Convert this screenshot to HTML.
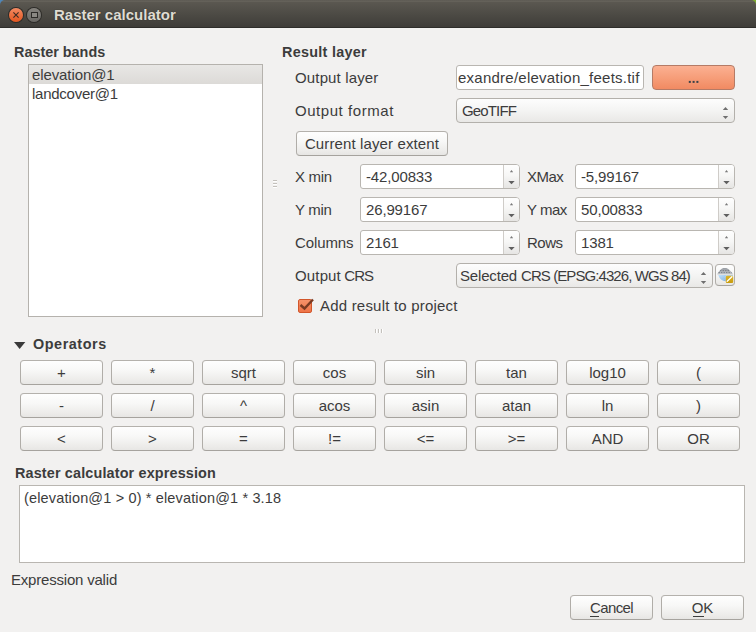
<!DOCTYPE html>
<html><head><meta charset="utf-8">
<style>
*{box-sizing:border-box;margin:0;padding:0}
html,body{width:756px;height:632px;overflow:hidden;background:#f2f1f0}
body{position:relative;font-family:"Liberation Sans",sans-serif;font-size:15px;color:#3c3c3c}
.a{position:absolute;white-space:nowrap}
.t{position:absolute;white-space:nowrap;line-height:1}
.b{font-weight:bold;font-size:14.4px}
#title{position:absolute;left:0;top:0;width:756px;height:28px;background:linear-gradient(#56534d 0px,#69665e 1px,#5a5750 2.5px,#4d4b45 14px,#3f3d39 26.5px,#2e2d2a 27px);border-radius:5px 5px 0 0}
.edit{position:absolute;background:#fff;border:1px solid #b9b6b1;border-radius:3px;overflow:hidden}
.btn{position:absolute;border:1px solid #b0ada8;border-color:#b4b1ac #b0ada8 #a6a39e;border-radius:4px;background:linear-gradient(#fefefe,#f8f8f7 40%,#ecebe9 85%,#e7e6e4);color:#3c3c3c}
.bt{left:0;right:0;top:4px;text-align:center}
.combo{position:absolute;border:1px solid #b3b0ab;border-radius:4px;background:linear-gradient(#fdfdfd,#f4f4f3 50%,#e9e8e6)}
.spin{position:absolute;background:#fff;border:1px solid #b9b6b1;border-radius:3px 4px 4px 3px;overflow:hidden}
.spin .sb{position:absolute;right:0;top:0;bottom:0;width:16px;border-left:1px solid #cfccc8;background:linear-gradient(#fefefe,#f7f7f6 45%,#e6e5e3)}
</style></head><body>
<div class="a" style="left:0;top:0;width:6px;height:6px;background:#4f86b8"></div><div class="a" style="left:750px;top:0;width:6px;height:6px;background:#7cab2c"></div>
<div id="title"></div>
<div class="a" style="left:8.6px;top:7.9px;width:14px;height:14px;border-radius:50%;background:linear-gradient(#f38a62,#e4561f);box-shadow:0 0 0 1px #2c2b28"></div>
<svg class="a" style="left:7.6px;top:6.9px" width="16" height="16"><path d="M5.4 5.4L10.6 10.6M10.6 5.4L5.4 10.6" stroke="#3a2a22" stroke-width="1.1"/></svg>
<div class="a" style="left:27.4px;top:7.9px;width:14px;height:14px;border-radius:50%;background:linear-gradient(#85837e,#6a6864);box-shadow:0 0 0 1px #2c2b28"></div>
<div class="a" style="left:31.2px;top:11.8px;width:6.8px;height:6.6px;border:1.3px solid #2b2a27;background:#8a8883"></div>
<div class="t" style="left:54px;top:7px;color:#dfdbd2;font-size:15px;font-weight:bold;text-shadow:0 0 1px #2a2926">Raster calculator</div>

<div class="t b" style="left:14px;top:45px">Raster bands</div>
<div class="edit" style="left:28px;top:64px;width:235px;height:253px;border-radius:0;border-color:#b5b2ad">
  <div class="a" style="left:0;top:0;width:233px;height:19px;background:linear-gradient(#e8e7e5,#dcdad7)"></div>
  <div class="t" style="left:3px;top:2px;letter-spacing:-0.1px">elevation@1</div>
  <div class="t" style="left:3px;top:21px;letter-spacing:-0.25px">landcover@1</div>
</div>
<div class="a" style="left:273px;top:180px;width:4px;height:1px;background:#c4c1bc;box-shadow:0 1px #fff,0 3px #c4c1bc,0 4px #fff,0 6px #c4c1bc,0 7px #fff"></div>

<div class="t b" style="left:282px;top:45px;letter-spacing:0.28px">Result layer</div>
<div class="t" style="left:295px;top:70px;letter-spacing:0.15px">Output layer</div>
<div class="edit" style="left:456px;top:65px;width:188px;height:25px">
  <div class="t" style="left:1px;top:4px;letter-spacing:0.24px">exandre/elevation_feets.tif</div>
</div>
<div class="btn" style="left:652px;top:65px;width:83px;height:25px;background:linear-gradient(#fbb092,#f7a07c 45%,#f18a62);border-color:#b57b66"></div>
<svg class="a" style="left:686px;top:78px" width="16" height="8"><rect x="2.8" y="2.9" width="2" height="2" fill="#3b4148"/><rect x="6.6" y="2.9" width="2" height="2" fill="#3b4148"/><rect x="10.4" y="2.9" width="2" height="2" fill="#3b4148"/></svg>
<div class="t" style="left:295px;top:103px;letter-spacing:0.55px">Output format</div>
<div class="combo" style="left:456px;top:98px;width:279px;height:25px">
  <div class="t" style="left:5px;top:4px;letter-spacing:-0.85px">GeoTIFF</div>
  <svg class="a" style="left:265px;top:0" width="14" height="23"><path d="M0.8 11.1L3.5 8L6.2 11.1Z" fill="#6f6f6f"/><path d="M0.8 17H6.2L3.5 20Z" fill="#6f6f6f"/></svg>
</div>
<div class="btn" style="left:296px;top:131px;width:152px;height:25px">
  <div class="t bt" style="letter-spacing:0.12px">Current layer extent</div>
</div>

<div class="t" style="left:295px;top:169px;letter-spacing:-0.3px">X min</div>
<div class="spin" style="left:360px;top:164px;width:160px;height:25px"><div class="t" style="left:5px;top:4px;letter-spacing:-0.15px">-42,00833</div><div class="sb"><svg width="16" height="23" style="position:absolute;left:0;top:0"><path d="M5.8 7.3L7.5 5L9.2 7.3Z" fill="#7a7a7a"/><path d="M4.3 16H10.7L7.5 19.2Z" fill="#5f5f5f"/></svg></div></div>
<div class="t" style="left:527px;top:169px;letter-spacing:-0.5px">XMax</div>
<div class="spin" style="left:575px;top:164px;width:160px;height:25px"><div class="t" style="left:5px;top:4px;letter-spacing:-0.15px">-5,99167</div><div class="sb"><svg width="16" height="23" style="position:absolute;left:0;top:0"><path d="M5.8 7.3L7.5 5L9.2 7.3Z" fill="#7a7a7a"/><path d="M4.3 16H10.7L7.5 19.2Z" fill="#5f5f5f"/></svg></div></div>
<div class="t" style="left:295px;top:202px;letter-spacing:-0.3px">Y min</div>
<div class="spin" style="left:360px;top:197px;width:160px;height:25px"><div class="t" style="left:5px;top:4px;letter-spacing:-0.15px">26,99167</div><div class="sb"><svg width="16" height="23" style="position:absolute;left:0;top:0"><path d="M5.8 7.3L7.5 5L9.2 7.3Z" fill="#7a7a7a"/><path d="M4.3 16H10.7L7.5 19.2Z" fill="#5f5f5f"/></svg></div></div>
<div class="t" style="left:527px;top:202px;letter-spacing:-0.5px">Y max</div>
<div class="spin" style="left:575px;top:197px;width:160px;height:25px"><div class="t" style="left:5px;top:4px;letter-spacing:-0.15px">50,00833</div><div class="sb"><svg width="16" height="23" style="position:absolute;left:0;top:0"><path d="M5.8 7.3L7.5 5L9.2 7.3Z" fill="#7a7a7a"/><path d="M4.3 16H10.7L7.5 19.2Z" fill="#5f5f5f"/></svg></div></div>
<div class="t" style="left:295px;top:235px;letter-spacing:-0.1px">Columns</div>
<div class="spin" style="left:360px;top:230px;width:160px;height:25px"><div class="t" style="left:5px;top:4px;letter-spacing:-0.15px">2161</div><div class="sb"><svg width="16" height="23" style="position:absolute;left:0;top:0"><path d="M5.8 7.3L7.5 5L9.2 7.3Z" fill="#7a7a7a"/><path d="M4.3 16H10.7L7.5 19.2Z" fill="#5f5f5f"/></svg></div></div>
<div class="t" style="left:527px;top:235px;letter-spacing:-0.5px">Rows</div>
<div class="spin" style="left:575px;top:230px;width:160px;height:25px"><div class="t" style="left:5px;top:4px;letter-spacing:-0.15px">1381</div><div class="sb"><svg width="16" height="23" style="position:absolute;left:0;top:0"><path d="M5.8 7.3L7.5 5L9.2 7.3Z" fill="#7a7a7a"/><path d="M4.3 16H10.7L7.5 19.2Z" fill="#5f5f5f"/></svg></div></div>

<div class="t" style="left:295px;top:268px;letter-spacing:0.15px">Output<span style="letter-spacing:-0.9px"> CRS</span></div>
<div class="combo" style="left:456px;top:263px;width:257px;height:25px">
  <div class="t" style="left:3px;top:4px"><span style="letter-spacing:-0.17px">Selected </span><span style="letter-spacing:-0.92px">CRS (EPSG:4326, WGS 84)</span></div>
  <svg class="a" style="left:243px;top:0" width="14" height="23"><path d="M0.8 11.1L3.5 8L6.2 11.1Z" fill="#6f6f6f"/><path d="M0.8 17H6.2L3.5 20Z" fill="#6f6f6f"/></svg>
</div>
<div class="btn" style="left:715px;top:264px;width:20px;height:22px"></div>
<svg class="a" style="left:716px;top:267px" width="18" height="17" viewBox="0 0 18 17">
  <defs><linearGradient id="dm" x1="0" y1="0" x2="0" y2="1"><stop offset="0" stop-color="#9a9ea4"/><stop offset="0.7" stop-color="#b3b8be"/><stop offset="1" stop-color="#c9ccd0"/></linearGradient>
  <linearGradient id="bl" x1="0" y1="0" x2="1" y2="1"><stop offset="0" stop-color="#c2e2fb"/><stop offset="1" stop-color="#6fa5dc"/></linearGradient>
  <linearGradient id="yl" x1="0" y1="0" x2="0" y2="1"><stop offset="0" stop-color="#dcb52c"/><stop offset="1" stop-color="#c89c0c"/></linearGradient></defs>
  <path d="M1.1 7.6 C2.2 5 4.6 2.2 7.2 1.1 L10.3 1.1 C13 2.2 15.6 5 17.2 7.6 Z" fill="url(#dm)"/>
  <path d="M4.2 3.6H14M2.6 5.6H15.6" stroke="#6e737a" stroke-width="0.9" stroke-dasharray="1.2 1.3" fill="none"/>
  <path d="M2.2 7.9 H17 V8.8 H9.8 V14.2 Q4.2 13.8 2.2 7.9Z" fill="url(#bl)"/>
  <path d="M4 10.5H9M5.5 12.5H9" stroke="#a9cdef" stroke-width="0.7" stroke-dasharray="1 1" fill="none"/>
  <rect x="9.8" y="8.8" width="7.4" height="7.2" rx="1.2" fill="url(#yl)"/>
  <path d="M11.2 14.3 L15.9 9.8" stroke="#fff" stroke-width="1.3" stroke-linecap="round"/>
</svg>

<div class="a" style="left:298px;top:299px;width:14px;height:14px;border:1px solid #d2562a;border-radius:2px;background:linear-gradient(#f6926a,#ee7447)"></div>
<svg class="a" style="left:297px;top:296px" width="18" height="16"><path d="M3.5 9 L7.5 12.5 L16 3.5" fill="none" stroke="#7a3a22" stroke-width="2.4"/></svg>
<div class="t" style="left:320px;top:298px;letter-spacing:0.2px">Add result to project</div>
<div class="a" style="left:375px;top:329px;width:1px;height:4px;background:#c4c1bc;box-shadow:1px 0 #fff,3px 0 #c4c1bc,4px 0 #fff,6px 0 #c4c1bc,7px 0 #fff"></div>

<svg class="a" style="left:13.5px;top:341.6px" width="12" height="8"><path d="M0 0H11.3L5.65 7Z" fill="#3a3a3a"/></svg>
<div class="t b" style="left:33px;top:337px;letter-spacing:0.55px">Operators</div>
<div class="btn" style="left:20px;top:360px;width:83px;height:25px"><div class="t bt">+</div></div>
<div class="btn" style="left:111px;top:360px;width:83px;height:25px"><div class="t bt">*</div></div>
<div class="btn" style="left:202px;top:360px;width:83px;height:25px"><div class="t bt">sqrt</div></div>
<div class="btn" style="left:293px;top:360px;width:83px;height:25px"><div class="t bt">cos</div></div>
<div class="btn" style="left:384px;top:360px;width:83px;height:25px"><div class="t bt">sin</div></div>
<div class="btn" style="left:475px;top:360px;width:83px;height:25px"><div class="t bt">tan</div></div>
<div class="btn" style="left:566px;top:360px;width:83px;height:25px"><div class="t bt">log10</div></div>
<div class="btn" style="left:657px;top:360px;width:83px;height:25px"><div class="t bt">(</div></div>
<div class="btn" style="left:20px;top:393px;width:83px;height:25px"><div class="t bt">-</div></div>
<div class="btn" style="left:111px;top:393px;width:83px;height:25px"><div class="t bt">/</div></div>
<div class="btn" style="left:202px;top:393px;width:83px;height:25px"><div class="t bt">^</div></div>
<div class="btn" style="left:293px;top:393px;width:83px;height:25px"><div class="t bt">acos</div></div>
<div class="btn" style="left:384px;top:393px;width:83px;height:25px"><div class="t bt">asin</div></div>
<div class="btn" style="left:475px;top:393px;width:83px;height:25px"><div class="t bt">atan</div></div>
<div class="btn" style="left:566px;top:393px;width:83px;height:25px"><div class="t bt">ln</div></div>
<div class="btn" style="left:657px;top:393px;width:83px;height:25px"><div class="t bt">)</div></div>
<div class="btn" style="left:20px;top:426px;width:83px;height:25px"><div class="t bt">&lt;</div></div>
<div class="btn" style="left:111px;top:426px;width:83px;height:25px"><div class="t bt">&gt;</div></div>
<div class="btn" style="left:202px;top:426px;width:83px;height:25px"><div class="t bt">=</div></div>
<div class="btn" style="left:293px;top:426px;width:83px;height:25px"><div class="t bt">!=</div></div>
<div class="btn" style="left:384px;top:426px;width:83px;height:25px"><div class="t bt">&lt;=</div></div>
<div class="btn" style="left:475px;top:426px;width:83px;height:25px"><div class="t bt">&gt;=</div></div>
<div class="btn" style="left:566px;top:426px;width:83px;height:25px"><div class="t bt">AND</div></div>
<div class="btn" style="left:657px;top:426px;width:83px;height:25px"><div class="t bt">OR</div></div>

<div class="t b" style="left:15px;top:466px;letter-spacing:0.15px">Raster calculator expression</div>
<div class="edit" style="left:19px;top:485px;width:726px;height:78px;border-radius:0">
  <div class="t" style="left:4px;top:5px;font-size:14.5px;letter-spacing:0.15px">(elevation@1 &gt; 0) * elevation@1 * 3.18</div>
</div>
<div class="t" style="left:11px;top:572px;letter-spacing:-0.2px">Expression valid</div>
<div class="btn" style="left:570px;top:595px;width:83px;height:25px"><div class="t bt" style="letter-spacing:-0.6px">Cancel</div><div class="a" style="left:19px;top:20px;width:9px;height:1px;background:#3c3c3c"></div></div>
<div class="btn" style="left:661px;top:595px;width:83px;height:25px"><div class="t bt">OK</div><div class="a" style="left:31px;top:20px;width:11px;height:1px;background:#3c3c3c"></div></div>
</body></html>
